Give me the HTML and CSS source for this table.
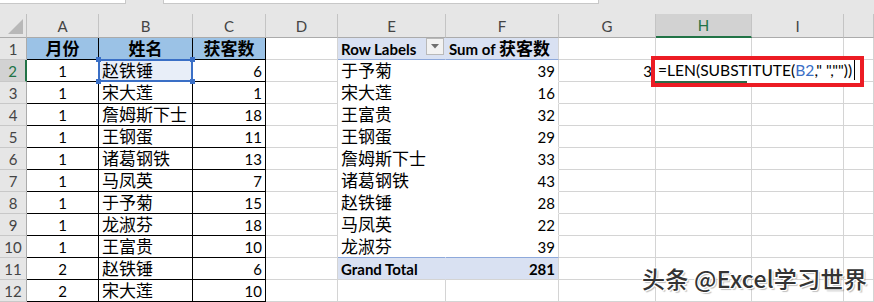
FILE: index.html
```html
<!DOCTYPE html>
<html lang="zh">
<head>
<meta charset="utf-8">
<title>Excel</title>
<link rel="stylesheet" href="styles.css">
</head>
<body>
<div class="app">
  <div class="topbar">
    <div class="box box1"></div>
    <div class="box box2"></div>
  </div>
  <div class="sheet">
    <div class="corner"><svg width="15" height="15" viewBox="0 0 15 15"><polygon points="15,0 15,15 0,15" fill="#b8b8b8"/></svg></div>
    <div class="ch">A</div><div class="ch">B</div><div class="ch">C</div><div class="ch">D</div><div class="ch">E</div><div class="ch">F</div><div class="ch">G</div><div class="ch sel">H</div><div class="ch">I</div><div class="ch"></div>

    <div class="rh">1</div>
    <div class="t th"><span class="zh">月份</span></div>
    <div class="t th"><span class="zh">姓名</span></div>
    <div class="t th"><span class="zh">获客数</span></div>
    <div></div>
    <div class="pe pvh">Row Labels<span class="dd"><svg width="8" height="5" viewBox="0 0 8 5"><polygon points="0,0 8,0 4,4.5" fill="#6f6f6f"/></svg></span></div>
    <div class="pvh">Sum of&nbsp;<span class="zh">获客数</span></div>
    <div></div><div></div><div></div><div></div>

    <div class="rh sel">2</div>
    <div class="t ctr">1</div>
    <div class="t ref"><span class="zh">赵铁锤</span><span class="refbox"><i class="h tl"></i><i class="h tr"></i><i class="h bl"></i><i class="h br"></i></span></div>
    <div class="t rgt">6</div>
    <div></div>
    <div class="pe pb"><span class="zh">于予菊</span></div>
    <div class="pb rgt">39</div>
    <div class="rgt">3</div><div></div><div></div><div></div>

    <div class="rh">3</div>
    <div class="t ctr">1</div>
    <div class="t"><span class="zh">宋大莲</span></div>
    <div class="t rgt">1</div>
    <div></div>
    <div class="pe pb"><span class="zh">宋大莲</span></div>
    <div class="pb rgt">16</div>
    <div></div><div></div><div></div><div></div>

    <div class="rh">4</div>
    <div class="t ctr">1</div>
    <div class="t"><span class="zh">詹姆斯下士</span></div>
    <div class="t rgt">18</div>
    <div></div>
    <div class="pe pb"><span class="zh">王富贵</span></div>
    <div class="pb rgt">32</div>
    <div></div><div></div><div></div><div></div>

    <div class="rh">5</div>
    <div class="t ctr">1</div>
    <div class="t"><span class="zh">王钢蛋</span></div>
    <div class="t rgt">11</div>
    <div></div>
    <div class="pe pb"><span class="zh">王钢蛋</span></div>
    <div class="pb rgt">29</div>
    <div></div><div></div><div></div><div></div>

    <div class="rh">6</div>
    <div class="t ctr">1</div>
    <div class="t"><span class="zh">诸葛钢铁</span></div>
    <div class="t rgt">13</div>
    <div></div>
    <div class="pe pb"><span class="zh">詹姆斯下士</span></div>
    <div class="pb rgt">33</div>
    <div></div><div></div><div></div><div></div>

    <div class="rh">7</div>
    <div class="t ctr">1</div>
    <div class="t"><span class="zh">马凤英</span></div>
    <div class="t rgt">7</div>
    <div></div>
    <div class="pe pb"><span class="zh">诸葛钢铁</span></div>
    <div class="pb rgt">43</div>
    <div></div><div></div><div></div><div></div>

    <div class="rh">8</div>
    <div class="t ctr">1</div>
    <div class="t"><span class="zh">于予菊</span></div>
    <div class="t rgt">15</div>
    <div></div>
    <div class="pe pb"><span class="zh">赵铁锤</span></div>
    <div class="pb rgt">28</div>
    <div></div><div></div><div></div><div></div>

    <div class="rh">9</div>
    <div class="t ctr">1</div>
    <div class="t"><span class="zh">龙淑芬</span></div>
    <div class="t rgt">18</div>
    <div></div>
    <div class="pe pb"><span class="zh">马凤英</span></div>
    <div class="pb rgt">22</div>
    <div></div><div></div><div></div><div></div>

    <div class="rh">10</div>
    <div class="t ctr">1</div>
    <div class="t"><span class="zh">王富贵</span></div>
    <div class="t rgt">10</div>
    <div></div>
    <div class="pe pb pvl"><span class="zh">龙淑芬</span></div>
    <div class="pb pvl rgt">39</div>
    <div></div><div></div><div></div><div></div>

    <div class="rh">11</div>
    <div class="t ctr">2</div>
    <div class="t"><span class="zh">赵铁锤</span></div>
    <div class="t rgt">6</div>
    <div></div>
    <div class="pe pvt">Grand Total</div>
    <div class="pvt rgt">281</div>
    <div></div><div></div><div></div><div></div>

    <div class="rh">12</div>
    <div class="t ctr">2</div>
    <div class="t"><span class="zh">宋大莲</span></div>
    <div class="t rgt">10</div>
    <div></div><div></div><div></div><div></div><div></div><div></div><div></div>
  </div>

  <div class="edit"><span class="ftext">=LEN(SUBSTITUTE(<span class="refc">B2</span>," ",""))</span><span class="caret"></span><span class="actline"></span></div>

  <div class="mark">头条 @Excel学习世界</div>
</div>
</body>
</html>
```
FILE: styles.css
```css
* { box-sizing: border-box; }
body {
  margin: 0;
  background: #fff;
  font-family: Lato, "Noto Sans CJK SC", sans-serif;
  font-size: 15px;
  color: #000;
}
.app {
  position: relative;
  width: 874px;
  height: 302px;
  overflow: hidden;
}
.topbar {
  height: 14px;
  background: #e6e6e6;
  display: flex;
  align-items: flex-start;
}
.box {
  height: 4px;
  background: #fff;
  border-bottom: 1px solid #c8c8c8;
}
.box1 { width: 126px; border-right: 1px solid #c8c8c8; }
.box2 { margin-left: 37px; width: 436px; border-left: 1px solid #c8c8c8; border-right: 1px solid #c8c8c8; }

.sheet {
  display: grid;
  grid-template-columns: 27px 72px 94px 73px 72px 108px 113px 97px 96px 92px 1fr;
  grid-template-rows: 24px repeat(12, 22px);
}
.sheet > * {
  display: flex;
  align-items: flex-end;
  line-height: 18px;
  padding: 0 3px 1px;
  border-right: 1px solid #d4d4d4;
  border-bottom: 1px solid #d4d4d4;
  white-space: nowrap;
}
.zh { font-size: 17px; }

.corner {
  background: #e6e6e6;
  border-right-color: #bfbfbf;
  border-bottom-color: #ababab;
  justify-content: flex-end;
  padding: 0 3px 3px 0;
}
.ch {
  background: #e6e6e6;
  align-items: center;
  justify-content: center;
  padding: 0;
  color: #444;
  border-right-color: #c4c4c4;
  border-bottom-color: #ababab;
}
.ch.sel {
  background: #d2d2d2;
  color: #217346;
  border-bottom: 2px solid #217346;
}
.rh {
  background: #e6e6e6;
  justify-content: center;
  padding: 0 0 1px;
  color: #444;
  border-right-color: #ababab;
  border-bottom-color: #c8c8c8;
}
.rh.sel {
  background: #d2d2d2;
  color: #217346;
  border-right: 2px solid #217346;
}

.t { border-right-color: #000; border-bottom-color: #000; }
.th { background: #9bc2e6; font-weight: 700; justify-content: center; }
.ctr { justify-content: center; }
.rgt { justify-content: flex-end; }

.pe { border-right-color: transparent; }
.pb { border-bottom-color: transparent; }
.pvl { border-bottom-color: #8ea9db; }
.pvh { background: #d9e1f2; font-weight: 700; border-bottom-color: #8ea9db; }
.pvt { background: #d9e1f2; font-weight: 700; }

.dd {
  margin-left: auto;
  margin-right: -2px;
  align-self: flex-start;
  width: 18px;
  height: 17px;
  border: 1px solid #b9b9b9;
  background: #f2f2f2;
  display: flex;
  align-items: center;
  justify-content: center;
}

.ref { position: relative; background: #e8eef8; }
.refbox {
  position: absolute;
  left: -1px;
  top: -1px;
  width: 95px;
  height: 23px;
  border: 2px solid #3a6fc6;
}
.h {
  position: absolute;
  width: 5px;
  height: 5px;
  background: #3a6fc6;
}
.h.tl { left: -4px; top: -4px; }
.h.tr { right: -4px; top: -4px; }
.h.bl { left: -4px; bottom: -4px; }
.h.br { right: -4px; bottom: -4px; }

.edit {
  position: absolute;
  left: 651px;
  top: 56px;
  width: 213px;
  height: 31px;
  border: 4px solid #ec1c24;
  background: #fff;
  padding: 1px 0 0 3px;
  line-height: 19px;
  font-size: 15.6px;
  white-space: nowrap;
  display: flex;
  align-items: flex-start;
}
.refc { color: #3a6fc6; }
.caret {
  display: inline-block;
  width: 1px;
  height: 20px;
  margin-top: -1px;
  margin-left: 2px;
  background: #000;
}
.actline {
  position: absolute;
  left: 0;
  top: 21px;
  width: 92px;
  height: 2px;
  background: #2c6a47;
}

.mark {
  position: absolute;
  left: 642px;
  top: 262px;
  font-family: "Noto Sans CJK SC", sans-serif;
  font-size: 23px;
  font-weight: 500;
  letter-spacing: 0.3px;
  line-height: 32px;
  color: #333;
  white-space: nowrap;
  text-shadow: -1px -1px 0 #fff, 1px 1px 0 #fff, 1px -1px 0 #fff, -1px 1px 0 #fff, 2px 2px 1px rgba(0,0,0,0.25);
}
```
